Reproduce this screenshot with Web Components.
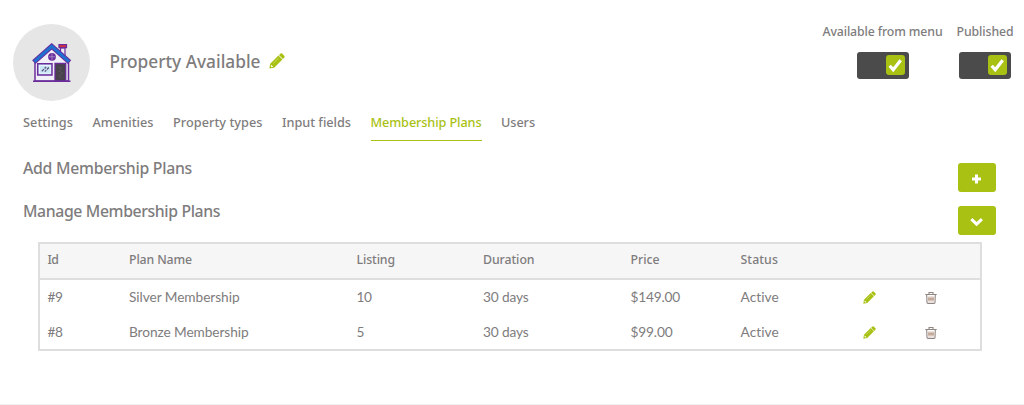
<!DOCTYPE html>
<html lang="en">
<head>
<meta charset="utf-8">
<title>Property Available</title>
<style>
body{margin:0;background:#fff;color:#7e7c7d;font-family:"Noto Sans","Open Sans",sans-serif;overflow:hidden}
</style>
</head>
<body>
<plans-page></plans-page>
<script>
const define=(name,html,after)=>customElements.define(name,class extends HTMLElement{
  connectedCallback(){
    if(this.shadowRoot)return;
    const t=document.createElement('template');
    t.innerHTML=html;
    this.attachShadow({mode:'open'}).append(t.content.cloneNode(true));
    if(after)after(this,this.shadowRoot);
  }
});

// Text whose tracking is adjusted so that it fills the width given in "fit".
define('fit-text',`<style>
:host{display:block;white-space:nowrap;line-height:20px}
span{display:inline-block}
</style><span><slot></slot></span>`,(el,root)=>{
  const s=root.querySelector('span'),target=+el.getAttribute('fit');
  if(!target)return;
  const w=s.getBoundingClientRect().width,n=el.textContent.length;
  s.style.letterSpacing=((target-w)/n)+'px';
  el.style.width=target+'px';
});

define('icon-pencil',`<style>:host{display:block;width:13px;height:13px}svg{display:block;width:100%;height:100%}</style>
<svg viewBox="0 0 16 16"><path fill="#a9c113" d="M.4 15.600 1.200 10.800 9.400 2.600l4 4-8.200 8.200zM10 2.100 11.600.6Q12.300 0 13.100.6L15.400 2.900Q16 3.700 15.400 4.400L13.900 6z"/><path d="M2.200 11.800 4.200 13.800 2.700 14.200 1.800 13.300z" fill="#fff"/><path d="M4.300 10.200 9.500 5" stroke="#cfdc74" stroke-width=".8"/></svg>`);

define('icon-trash',`<style>:host{display:block;width:12px;height:13px}svg{display:block}</style>
<svg width="12" height="13" viewBox="0 0 12 13" fill="none" stroke="#8f8581" stroke-width="1.100"><path d="M.3 3.500H11.700M4 3.200V1.500H8V3.200M1.700 3.500 2 11.500Q2 12.400 3 12.400H9Q10 12.400 10 11.500L10.300 3.500"/><path stroke="#b08d78" stroke-width="1" d="M4 5.500V10.500M6 5.500V10.500M8 5.500V10.500M3 8H9"/></svg>`);

define('icon-house',`<style>:host{display:block;width:40px;height:40px}svg{display:block}</style>
<svg width="40" height="40" viewBox="0 0 40 40">
<path fill="#eceaf5" stroke="#6b2c9c" stroke-width="1.200" d="M28.500 13V5h4.500v11"/>
<path fill="#d92f3c" stroke="#6b2c9c" stroke-width="1.200" d="M27 1.600h7.500v3H27z"/>
<path fill="#f1f0f8" stroke="#6b2c9c" stroke-width="1.500" d="M3 38V18L19.500 4 36.500 18V38z"/>
<path fill="none" stroke="#6b2c9c" stroke-width="5" d="M1.800 19.200 19.700 3.300 37.600 19.200"/>
<path fill="none" stroke="#1f6fd0" stroke-width="3.100" d="M2.400 18.700 19.700 3.300 37 18.700"/>
<circle cx="20" cy="13.800" r="3.900" fill="#6b2c9c"/><path d="M20 10.500v6.600M16.700 13.800h6.600" stroke="#b7a0d0" stroke-width=".7"/>
<path fill="#c9e6f4" stroke="#6b2c9c" stroke-width="1.500" d="M5.700 20.700h14.300v11.300H5.700z"/>
<path d="M7.500 22.500h10.700v7.700H7.500z" fill="none" stroke="#eef9ff" stroke-width=".8"/>
<path stroke="#5d4f7d" stroke-width="1.300" d="m9.800 28.300 2.200-2.200m.6-.6 1.500-1.500M12.800 28.600l1.500-1.500m.6-.600 2-2"/>
<path fill="#47434a" stroke="#6b2c9c" stroke-width="1.300" d="M23 20.500h10.700V38H23z"/>
<path fill="none" stroke="#5d5062" stroke-width=".8" d="m26 24 4 1-3 3 4 2-4 3 3 2"/>
<path stroke="#6b2c9c" stroke-width="1.600" d="M1 38.200H38.500"/>
</svg>`);

define('check-toggle',`<style>
:host{display:flex;flex-direction:column;font-size:12.300px;font-weight:550}
fit-text,::slotted(*){position:static}
.track{box-sizing:border-box;width:52px;height:27px;border-radius:3px;background:#4b4b4b;margin-top:10px;padding:3px 4px 4px 3px;display:flex;justify-content:flex-end}
:host([center]) .track{margin-left:34px}
:host(:not([center])) .track{margin-left:2.500px}
.knob{width:19px;height:20px;border-radius:3px;background:#a9c113}
svg{display:block}
</style><slot></slot><div class="track"><div class="knob"><svg width="19" height="20"><path d="m3.700 10.800 3.500 4 7.500-9.600" fill="none" stroke="#fff" stroke-width="3.200"/></svg></div></div>`);

define('page-header',`<style>
:host{display:flex;align-items:flex-start;height:112px;padding-left:13px}
.avatar{margin-top:24px;width:77px;height:77px;border-radius:50%;background:#e6e6e6;display:flex;justify-content:center;align-items:center}
.title{display:flex;align-items:center;gap:8px;margin:51px 0 0 19.500px;font-size:17.300px;font-weight:550}
.title fit-text{padding-top:1px}
icon-pencil{width:16px;height:16px;margin-top:-2px}
.toggles{display:flex;gap:14px;margin:22px 0 0 auto;padding-right:10.500px}
</style>
<div class="avatar"><icon-house></icon-house></div>
<div class="title"><fit-text fit="151">Property Available</fit-text><icon-pencil></icon-pencil></div>
<div class="toggles"><check-toggle center><fit-text fit="120">Available from menu</fit-text></check-toggle><check-toggle><fit-text fit="57">Published</fit-text></check-toggle></div>`);

define('tab-bar',`<style>
:host{display:flex;gap:19.500px;padding-left:23px;height:29px;font-size:12.700px;font-weight:550}
::slotted(.active){color:#a9c113;border-bottom:1px solid #a9c113;padding-bottom:8px}
</style><slot></slot>`);

define('green-button',`<style>
:host{display:flex;justify-content:center;align-items:center;width:38px;height:29px;border-radius:3px;background:#a9c113}
svg{display:block}
path{fill:none;stroke:#fff;stroke-width:3}
</style><svg width="14" height="14"><path/></svg>`,(el,r)=>r.querySelector('path').setAttribute('d',el.getAttribute('kind')==='add'?'M6.500 3.500V12.500M2 8H11':'M1.300 5.200 6.600 10.200 11.900 5.200'));

define('section-row',`<style>
:host{display:flex;justify-content:space-between;height:29px;padding:0 28px 0 23px;font-size:15.800px;font-weight:550}
.label{margin-top:-5px}
</style><div class="label"><slot></slot></div><slot name="action"></slot>`);

define('plan-row',`<style>
:host{box-sizing:border-box;display:grid;grid-template-columns:81.500px 227.500px 126.500px 147.500px 110px 122.500px 62px 1fr;align-items:center;height:35px;padding:0 0 1px 8px;font-family:Lato,sans-serif;font-size:13.700px}
:host([head]){height:36px;padding-bottom:3px;background:#f6f6f6;font-family:"Noto Sans","Open Sans",sans-serif;font-size:12.300px;font-weight:550;border-bottom:2px solid #dedede}
</style><slot></slot>`);

const texts=(cells)=>cells.map(([t,w])=>`<fit-text fit="${w}">${t}</fit-text>`).join('');
const actions='<icon-pencil></icon-pencil><icon-trash></icon-trash>';
define('plan-table',`<style>
:host{display:block;box-sizing:border-box;width:944px;height:109px;margin:7px 0 0 37.500px;border:2px solid #dedede}
</style>
<plan-row head>${texts([['Id',11],['Plan Name',63],['Listing',38.5],['Duration',51.5],['Price',29],['Status',37.5]])}</plan-row>
<plan-row>${texts([['#9',15],['Silver Membership',110.5],['10',15],['30 days',45.5],['$149.00',49.5],['Active',38.5]])}${actions}</plan-row>
<plan-row>${texts([['#8',15],['Bronze Membership',119.5],['5',8],['30 days',45.5],['$99.00',42],['Active',38.5]])}${actions}</plan-row>`);

define('plans-page',`<style>
:host{display:flex;flex-direction:column;width:1024px;height:405px}
.sections{display:flex;flex-direction:column;gap:14px;margin-top:22px}
footer{margin-top:auto;height:1px;background:#f1f1f1}
</style>
<page-header></page-header>
<tab-bar><fit-text fit="50">Settings</fit-text><fit-text fit="61">Amenities</fit-text><fit-text fit="89.500">Property types</fit-text><fit-text fit="69">Input fields</fit-text><fit-text class="active" fit="111">Membership Plans</fit-text><fit-text fit="34">Users</fit-text></tab-bar>
<div class="sections">
<section-row><fit-text fit="169">Add Membership Plans</fit-text><green-button slot="action" kind="add"></green-button></section-row>
<section-row><fit-text fit="197">Manage Membership Plans</fit-text><green-button slot="action" kind="open"></green-button></section-row>
</div>
<plan-table></plan-table>
<footer></footer>`);
</script>
</body>
</html>
